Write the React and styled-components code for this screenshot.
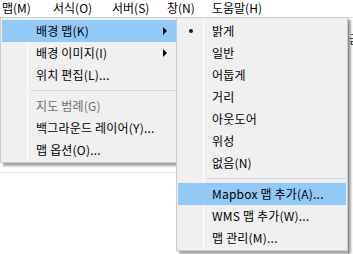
import React from 'react';
import styled, { createGlobalStyle } from 'styled-components';

const GlobalStyle = createGlobalStyle`
  html, body {
    margin: 0;
    padding: 0;
    background: #ffffff;
    overflow: hidden;
  }
  body {
    font-family: "Noto Sans CJK KR", "Noto Sans", sans-serif;
    font-size: 12px;
    color: #000;
  }
`;

const Screen = styled.div`
  position: relative;
  width: 353px;
  height: 254px;
  background: #ffffff;
  overflow: hidden;
`;

const MenuBar = styled.div`
  display: flex;
  height: 17px;
  border-bottom: 1px solid #e6e6e6;
  background: #ffffff;
`;

const BarItem = styled.div`
  box-sizing: border-box;
  width: ${(p) => (p.$w ? `${p.$w}px` : 'auto')};
  padding-left: ${(p) => p.$pad}px;
  line-height: 16px;
  white-space: nowrap;
`;

const Workspace = styled.div`
  display: flex;
  height: 236px;
`;

const Canvas = styled.div`
  flex: 1;
  display: flex;
  flex-direction: column;
`;

const CanvasTop = styled.div`
  height: 154px;
  border-bottom: 1px solid #e3e3e3;
`;

const SidePanel = styled.div`
  width: 4px;
  border-left: 1px solid #d4d4d4;
  padding-top: 12px;
  overflow: hidden;
  white-space: nowrap;
  color: #222;
  font-size: 12px;
`;

const Menu = styled.div`
  position: absolute;
  top: 17px;
  left: ${(p) => p.$left}px;
  width: ${(p) => p.$width}px;
  box-sizing: border-box;
  padding: 2px 1px 1px;
  border: 1px solid #cccccc;
  background:
    linear-gradient(to right, transparent 26px, #ffffff 26px, #ffffff 27px, transparent 27px),
    #f0f0f0;
  box-shadow: 3px 3px 2px rgba(0, 0, 0, 0.35);
`;

const Row = styled.div`
  display: flex;
  align-items: center;
  height: 22px;
  background: ${(p) => (p.$active ? '#91c9f7' : 'transparent')};
  color: ${(p) => (p.$disabled ? '#6d6d6d' : '#000')};
  white-space: nowrap;
`;

const Gutter = styled.div`
  width: 26px;
  display: flex;
  justify-content: center;
  align-items: center;
  flex-shrink: 0;
`;

const Bullet = styled.span`
  width: 4px;
  height: 4px;
  border-radius: 50%;
  background: #1a1a1a;
`;

const Label = styled.span`
  flex: 1;
  padding-left: 8px;
  line-height: 22px;
  letter-spacing: 0.2px;
`;

const Arrow = styled.span`
  width: 0;
  height: 0;
  margin-right: 9px;
  border-left: 4px solid #000;
  border-top: 4px solid transparent;
  border-bottom: 4px solid transparent;
`;

const Separator = styled.div`
  height: 9px;
  display: flex;
  align-items: center;
  padding-left: 29px;
  &::after {
    content: '';
    flex: 1;
    height: 1px;
    background: #d7d7d7;
  }
`;

const barItems = [
  { label: '맵(M)', pad: 2, w: 44 },
  { label: '서식(O)', pad: 9, w: 59 },
  { label: '서버(S)', pad: 9, w: 55 },
  { label: '창(N)', pad: 9, w: 45 },
  { label: '도움말(H)', pad: 9 },
];

const mainItems = [
  { label: '배경 맵(K)', sub: true, active: true },
  { label: '배경 이미지(I)', sub: true },
  { label: '위치 편집(L)...' },
  { sep: true },
  { label: '지도 범례(G)', disabled: true },
  { label: '백그라운드 레이어(Y)...' },
  { label: '맵 옵션(O)...' },
];

const subItems = [
  { label: '밝게', checked: true },
  { label: '일반' },
  { label: '어둡게' },
  { label: '거리' },
  { label: '아웃도어' },
  { label: '위성' },
  { label: '없음(N)' },
  { sep: true },
  { label: 'Mapbox 맵 추가(A)...', active: true },
  { label: 'WMS 맵 추가(W)...' },
  { label: '맵 관리(M)...' },
];

const MenuList = ({ items, left, width }) => (
  <Menu $left={left} $width={width}>
    {items.map((it, i) =>
      it.sep ? (
        <Separator key={i} />
      ) : (
        <Row key={i} $active={it.active} $disabled={it.disabled}>
          <Gutter>{it.checked && <Bullet />}</Gutter>
          <Label>{it.label}</Label>
          {it.sub && <Arrow />}
        </Row>
      )
    )}
  </Menu>
);

export default function App() {
  return (
    <>
      <GlobalStyle />
      <Screen>
        <MenuBar>
          {barItems.map((b) => (
            <BarItem key={b.label} $pad={b.pad} $w={b.w}>
              {b.label}
            </BarItem>
          ))}
        </MenuBar>
        <Workspace>
          <Canvas>
            <CanvasTop />
          </Canvas>
          <SidePanel>금</SidePanel>
        </Workspace>
        <MenuList items={mainItems} left={0} width={178} />
        <MenuList items={subItems} left={176} width={172} />
      </Screen>
    </>
  );
}
